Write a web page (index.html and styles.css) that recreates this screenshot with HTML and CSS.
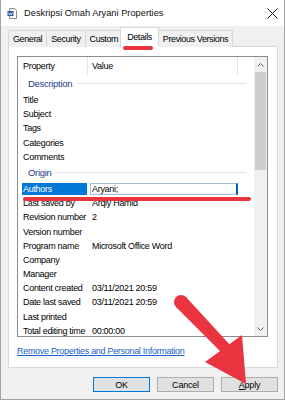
FILE: index.html
```html
<!DOCTYPE html>
<html lang="en">
<head>
    <meta charset="UTF-8">
    <meta name="viewport" content="width=device-width, initial-scale=1.0">
    <title>Deskripsi Omah Aryani Properties</title>
    <link rel="stylesheet" href="styles.css">
</head>
<body>
    <div class="window">
        <div class="titlebar">
            <svg class="doc-icon" width="10" height="11" viewBox="0 0 10 11">
                <path d="M2.5 0.5h5l2 2v8h-7z" fill="#fff" stroke="#8a8a8a"/>
                <rect x="0.5" y="3" width="6" height="5" fill="#2b579a"/>
                <path d="M1.5 4.5l1 2.5 1-2 1 2 1-2.5" fill="none" stroke="#fff" stroke-width="0.7"/>
            </svg>
            <span class="title">Deskripsi Omah Aryani Properties</span>
            <svg class="close" width="11" height="11" viewBox="0 0 11 11">
                <path d="M0.5 0.5l10 10M10.5 0.5l-10 10" stroke="#1a1a1a" stroke-width="1"/>
            </svg>
        </div>

        <div class="dialog">
            <div class="tabs">
                <div class="tab">General</div>
                <div class="tab">Security</div>
                <div class="tab">Custom</div>
                <div class="tab active">Details</div>
                <div class="tab">Previous Versions</div>
            </div>

            <div class="panel">
                <div class="list">
                    <div class="rows">
                        <div class="header">
                            <div class="col-prop">Property</div>
                            <div class="col-val">Value</div>
                        </div>

                        <div class="group">Description</div>
                        <div class="row"><div class="prop">Title</div><div class="val"></div></div>
                        <div class="row"><div class="prop">Subject</div><div class="val"></div></div>
                        <div class="row"><div class="prop">Tags</div><div class="val"></div></div>
                        <div class="row"><div class="prop">Categories</div><div class="val"></div></div>
                        <div class="row"><div class="prop">Comments</div><div class="val"></div></div>

                        <div class="group">Origin</div>
                        <div class="row selected"><div class="prop">Authors</div><div class="val edit">Aryani;</div></div>
                        <div class="row"><div class="prop">Last saved by</div><div class="val">Arqiy Hamid</div></div>
                        <div class="row"><div class="prop">Revision number</div><div class="val">2</div></div>
                        <div class="row"><div class="prop">Version number</div><div class="val"></div></div>
                        <div class="row"><div class="prop">Program name</div><div class="val">Microsoft Office Word</div></div>
                        <div class="row"><div class="prop">Company</div><div class="val"></div></div>
                        <div class="row"><div class="prop">Manager</div><div class="val"></div></div>
                        <div class="row"><div class="prop">Content created</div><div class="val">03/11/2021 20:59</div></div>
                        <div class="row"><div class="prop">Date last saved</div><div class="val">03/11/2021 20:59</div></div>
                        <div class="row"><div class="prop">Last printed</div><div class="val"></div></div>
                        <div class="row"><div class="prop">Total editing time</div><div class="val">00:00:00</div></div>
                    </div>

                    <div class="scrollbar">
                        <div class="sb-btn">
                            <svg width="7" height="4" viewBox="0 0 7 4"><path d="M0.5 3.5l3-3 3 3" fill="none" stroke="#606060"/></svg>
                        </div>
                        <div class="sb-track"><div class="sb-thumb"></div></div>
                        <div class="sb-btn">
                            <svg width="7" height="4" viewBox="0 0 7 4"><path d="M0.5 0.5l3 3 3-3" fill="none" stroke="#606060"/></svg>
                        </div>
                    </div>
                </div>

                <a class="remove-link" href="#remove">Remove Properties and Personal Information</a>
            </div>

            <div class="buttons">
                <button class="btn default">OK</button>
                <button class="btn">Cancel</button>
                <button class="btn"><u>A</u>pply</button>
            </div>
        </div>

        <!-- red annotation marks drawn over the dialog -->
        <div class="mark mark-tab"></div>
        <div class="mark mark-row"></div>
        <svg class="arrow" width="285" height="400" viewBox="0 0 285 400">
            <circle cx="180" cy="302" r="7" fill="#ea3440"/>
            <polygon points="175,307 185,297 230,346 222,354" fill="#ea3440"/>
            <polygon points="204,362 241,335 245,384" fill="#ea3440"/>
        </svg>
    </div>
</body>
</html>
```

FILE: styles.css
```css
* {
    margin: 0;
    padding: 0;
    box-sizing: border-box;
}

body {
    font-family: 'Liberation Sans', Arial, sans-serif;
    font-size: 9px;
    color: #000;
    background: #f0f0f0;
}

.window {
    position: relative;
    width: 285px;
    height: 400px;
    background: #f0f0f0;
    border: 1px solid #a3a3a3;
    border-top: none;
    overflow: hidden;
}

.titlebar {
    height: 26px;
    background: #fff;
    display: flex;
    align-items: center;
    padding-left: 6px;
    padding-right: 6px;
}

.doc-icon {
    margin-right: 7px;
}

.title {
    flex: 1;
    font-size: 9.3px;
    color: #111;
}

.dialog {
    padding: 1px 6px 0 7px;
}

.tabs {
    display: flex;
    align-items: flex-end;
    height: 20px;
    margin-bottom: -1px;
}

.tab {
    height: 17px;
    line-height: 16px;
    padding: 0 4px;
    margin-right: -1px;
    border: 1px solid #d9d9d9;
    border-bottom: none;
    background: #f0f0f0;
    letter-spacing: -0.4px;
    white-space: nowrap;
}

.tab.active {
    position: relative;
    z-index: 1;
    height: 20px;
    line-height: 18px;
    margin: 0 -1px 0 -2px;
    padding: 0 6px;
    background: #fff;
}

.panel {
    height: 322px;
    background: #fff;
    border: 1px solid #d9d9d9;
    padding: 9px 9px 0 8px;
}

.list {
    display: flex;
    height: 281px;
    border: 1px solid #8c8c8c;
}

.rows {
    flex: 1;
    overflow: hidden;
    letter-spacing: -0.3px;
}

.header {
    display: flex;
    height: 18px;
    line-height: 18px;
}

.col-prop {
    width: 70px;
    padding-left: 5px;
    border-right: 1px solid #e5e5e5;
}

.col-val {
    width: 150px;
    padding-left: 4px;
    border-right: 1px solid #e5e5e5;
}

.group {
    display: flex;
    align-items: center;
    height: 18px;
    padding: 0 8px 1px 10px;
    color: #1e3c8c;
    font-size: 9.5px;
}

.group::after {
    content: "";
    flex: 1;
    height: 1px;
    margin-left: 5px;
    background: #e2e5ee;
}

.row {
    display: flex;
    height: 14.2px;
    line-height: 14.2px;
    white-space: nowrap;
}

.prop {
    width: 70px;
    padding-left: 5px;
}

.val {
    padding-left: 4px;
}

.row.selected .prop {
    width: 65px;
    margin: 1px 1px 1px 4px;
    padding-left: 1px;
    line-height: 12.2px;
    background: #0078d7;
    color: #fff;
}

.row.selected .edit {
    width: 148px;
    margin: 1px 0 1px 2px;
    padding-left: 1px;
    line-height: 10.2px;
    border: 1px solid #a9bcd6;
    border-right: 2px solid #0063b1;
}

.scrollbar {
    width: 13px;
    display: flex;
    flex-direction: column;
    background: #f0f0f0;
}

.sb-btn {
    height: 15px;
    display: flex;
    align-items: center;
    justify-content: center;
}

.sb-track {
    flex: 1;
}

.sb-thumb {
    height: 98px;
    margin: 0 1px;
    background: #cdcdcd;
}

.remove-link {
    display: block;
    margin-top: 9px;
    line-height: 11px;
    color: #1a62c6;
    letter-spacing: -0.3px;
}

.buttons {
    display: flex;
    justify-content: flex-end;
    gap: 7px;
    margin-top: 9px;
}

.btn {
    width: 57px;
    height: 15px;
    font-family: 'Liberation Sans', Arial, sans-serif;
    font-size: 9px;
    letter-spacing: -0.2px;
    color: #000;
    background: #e1e1e1;
    border: 1px solid #adadad;
}

.btn.default {
    border-color: #0078d7;
}

.mark {
    position: absolute;
    background: #ea3440;
    border-radius: 3px;
}

.mark-tab {
    left: 122px;
    top: 46px;
    width: 30px;
    height: 4px;
    z-index: 2;
}

.mark-row {
    left: 22px;
    top: 197px;
    width: 228px;
    height: 4px;
}

.arrow {
    position: absolute;
    left: 0;
    top: 0;
    pointer-events: none;
}
```
